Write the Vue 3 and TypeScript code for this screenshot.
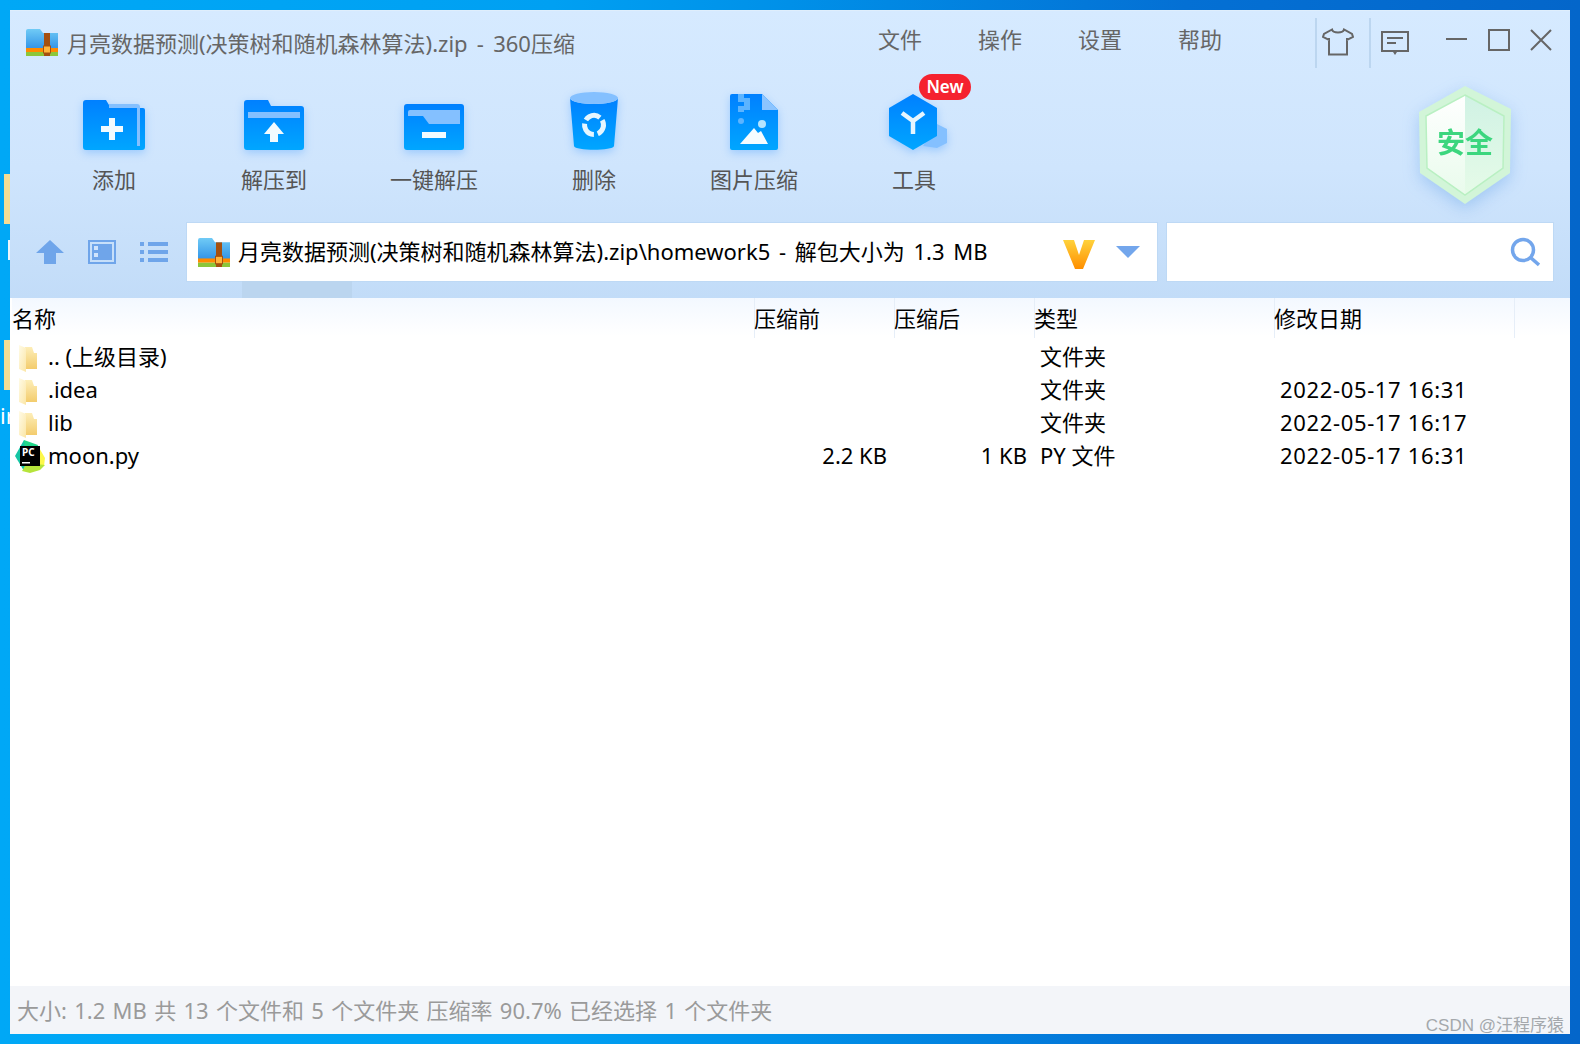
<template>
  <div class="desktop">
    <div class="desk-folder desk-folder-a"></div>
    <div class="desk-folder desk-folder-b"></div>
    <div class="desk-white"></div>
    <span class="desk-text">ir</span>

    <div class="window">
      <svg class="defs" width="0" height="0">
        <defs>
          <linearGradient id="blue" x1="0" y1="0" x2="0" y2="1">
            <stop offset="0" stop-color="#0080ff" />
            <stop offset="1" stop-color="#00a6ff" />
          </linearGradient>
          <linearGradient id="zipBlue" x1="0" y1="0" x2="0" y2="1">
            <stop offset="0" stop-color="#70cbf6" />
            <stop offset="1" stop-color="#2e90e6" />
          </linearGradient>
          <linearGradient id="leaf" x1="0" y1="0" x2="1" y2="1">
            <stop offset="0" stop-color="#fffbe6" />
            <stop offset="1" stop-color="#fbe6a6" />
          </linearGradient>
          <linearGradient id="leafBack" x1="0" y1="0" x2="0" y2="1">
            <stop offset="0" stop-color="#fdeeb8" />
            <stop offset="1" stop-color="#f3cc6d" />
          </linearGradient>
          <linearGradient id="vee" x1="0" y1="0" x2="0" y2="1">
            <stop offset="0" stop-color="#ffd23c" />
            <stop offset="1" stop-color="#ff8f00" />
          </linearGradient>
          <linearGradient id="shieldL" x1="0" y1="0" x2="0" y2="1">
            <stop offset="0" stop-color="#ffffff" />
            <stop offset="1" stop-color="#e9fbec" />
          </linearGradient>
          <linearGradient id="shieldR" x1="0" y1="0" x2="0" y2="1">
            <stop offset="0" stop-color="#d0f2e4" />
            <stop offset="1" stop-color="#e6fbe8" />
          </linearGradient>
          <symbol id="zip" viewBox="0 0 32 28">
            <path d="M0 3a2 2 0 0 1 2-2h12l3 4h15v17H0z" fill="url(#zipBlue)" />
            <rect y="20" width="32" height="4" fill="#ff8a00" />
            <rect y="24" width="32" height="4" fill="#8cc63a" />
            <rect x="18" y="5" width="6" height="23" fill="#a5500f" />
            <rect x="17.5" y="18" width="7" height="7" fill="#ffb43c" stroke="#a5500f" stroke-width="1" />
          </symbol>
          <symbol id="dirIcon" viewBox="0 0 18 28">
            <path d="M6 2h7l2 6h3v16H6z" fill="url(#leafBack)" />
            <path d="M0 0l7 3v24l-7-3z" fill="url(#leaf)" />
          </symbol>
        </defs>
      </svg>

      <header class="chrome">
        <div class="titlebar">
          <svg class="title-zip" width="32" height="28"><use href="#zip" /></svg>
          <span class="title-text">月亮数据预测(决策树和随机森林算法).zip - 360压缩</span>
          <nav class="menu">
            <a v-for="m in menus" :key="m">{{ m }}</a>
          </nav>
          <div class="skin-btn">
            <svg class="shirt" width="32" height="28" viewBox="0 0 32 28" fill="none" stroke="#666" stroke-width="2">
              <path d="M10 1.500 2 6l-1 3 6 3 0-2v16.500h18V10l0 2 6-3-1-3-8-4.500c-1 4-11 4-12 0z" />
            </svg>
          </div>
          <div class="skin-btn skin-btn-msg">
            <svg width="28" height="25" viewBox="0 0 28 25" fill="none" stroke="#666" stroke-width="2">
              <rect x="1" y="1" width="26" height="19" />
              <path d="M6 7h16M6 12h9" />
              <path d="M12 21h4l-2 3z" fill="#666" stroke="none" />
            </svg>
          </div>
          <div class="controls">
            <svg width="22" height="22" viewBox="0 0 22 22" stroke="#666" stroke-width="2" fill="none"><path d="M0 10h21" /></svg>
            <svg width="22" height="22" viewBox="0 0 22 22" stroke="#666" stroke-width="2" fill="none"><rect x="1" y="1" width="20" height="20" /></svg>
            <svg width="22" height="22" viewBox="0 0 22 22" stroke="#666" stroke-width="2" fill="none"><path d="M1 1l20 20M21 1 1 21" /></svg>
          </div>
        </div>

        <div class="toolbar">
          <button class="tool">
            <span class="tool-icon">
              <svg width="62" height="50" viewBox="0 0 62 50">
                <path d="M0 3a3 3 0 0 1 3-3h20l3 5h28v3h6a2 2 0 0 1 2 2v37a3 3 0 0 1-3 3H3a3 3 0 0 1-3-3z" fill="url(#blue)" />
                <path d="M26 4h28a3 3 0 0 1 3 3v39h-3V8H26z" fill="#84c0ff" />
                <path d="M26 18h6v8h8v6h-8v8h-6v-8h-8v-6h8z" fill="#f2fbff" />
              </svg>
            </span>
            <span class="tool-label">添加</span>
          </button>
          <button class="tool">
            <span class="tool-icon">
              <svg width="60" height="50" viewBox="0 0 60 50">
                <path d="M0 3a3 3 0 0 1 3-3h21l3 6h30a3 3 0 0 1 3 3v38a3 3 0 0 1-3 3H3a3 3 0 0 1-3-3z" fill="url(#blue)" />
                <rect x="4" y="12" width="52" height="6" fill="#84c0ff" />
                <path d="M30 22 40 34h-6v8h-8v-8h-6z" fill="#f2fbff" />
              </svg>
            </span>
            <span class="tool-label">解压到</span>
          </button>
          <button class="tool">
            <span class="tool-icon">
              <svg width="60" height="46" viewBox="0 0 60 46">
                <rect width="60" height="46" rx="3" fill="url(#blue)" />
                <path d="M4 8a2 2 0 0 1 2-2h50v14H25l-6-8H4z" fill="#84c0ff" />
                <rect x="18" y="28" width="24" height="6" fill="#f2fbff" />
              </svg>
            </span>
            <span class="tool-label">一键解压</span>
          </button>
          <button class="tool">
            <span class="tool-icon">
              <svg width="48" height="58" viewBox="0 0 48 58">
                <path d="M0 6c2 8 46 8 48 0l-4 48c-1 5-39 5-40 0z" fill="url(#blue)" />
                <ellipse cx="24" cy="6" rx="24" ry="6" fill="#84c0ff" />
                <circle cx="24" cy="33" r="9.500" fill="none" stroke="#e6f6ff" stroke-width="5" stroke-dasharray="16 3.900" transform="rotate(-30 24 33)" />
              </svg>
            </span>
            <span class="tool-label">删除</span>
          </button>
          <button class="tool">
            <span class="tool-icon">
              <svg width="48" height="56" viewBox="0 0 48 56">
                <path d="M2 0h30l16 16v38a2 2 0 0 1-2 2H2a2 2 0 0 1-2-2V2a2 2 0 0 1 2-2z" fill="url(#blue)" />
                <path d="M32 0l16 16H32z" fill="#8bc4ff" />
                <path d="M8 0h6v4H8zM8 4h12v4H8zM14 8h6v4h-6zM8 12h12v4H8zM8 16h6v2H8z" fill="#5cb4ff" />
                <circle cx="11" cy="27" r="3" fill="#5cb4ff" />
                <circle cx="32" cy="30" r="4" fill="#b4e4ff" />
                <path d="M10 50 24 34l4 5 3-2 7 13z" fill="#f6fcff" />
              </svg>
            </span>
            <span class="tool-label">图片压缩</span>
          </button>
          <button class="tool">
            <span class="tool-icon tool-icon-y">
              <svg width="58" height="56" viewBox="0 0 58 56">
                <path d="M48 30l10 5v14l-10 5-14-2z" fill="#84c0ff" />
                <path d="M24 0l24 14v28L24 56 0 42V14z" fill="url(#blue)" />
                <path d="M13 19l11 8 11-8M24 27v13" fill="none" stroke="#e6f6ff" stroke-width="4.500" />
              </svg>
              <span class="new-badge">New</span>
            </span>
            <span class="tool-label">工具</span>
          </button>
          <div class="shield">
            <svg width="92" height="118" viewBox="0 0 92 118">
              <path d="M46 0 92 23l-1 64-45 31L1 87 0 26z" fill="#d2f5d8" />
              <path d="M46 9 7 30l1 52 38 27z" fill="url(#shieldL)" />
              <path d="M46 9l39 21-1 52-38 27z" fill="url(#shieldR)" />
              <path d="M46 9 85 30l-1 52-38 27L8 82 7 30z" fill="none" stroke="#b9f0c2" stroke-width="1.500" />
              <text x="46" y="67" text-anchor="middle" class="shield-text">安全</text>
            </svg>
          </div>
        </div>

        <div class="navbar">
          <svg class="nav-up" width="28" height="24" viewBox="0 0 28 24"><path d="M14 0l14 13h-8v11H8V13H0z" fill="#6fa5ea" /></svg>
          <svg class="nav-view" width="28" height="24" viewBox="0 0 28 24">
            <rect x="1" y="1" width="26" height="22" fill="none" stroke="#6fa5ea" stroke-width="2" />
            <rect x="4" y="4" width="20" height="16" fill="#6fa5ea" />
            <rect x="6" y="6" width="4" height="4" fill="#d0e4fc" />
            <rect x="6" y="13" width="4" height="4" fill="#d0e4fc" />
          </svg>
          <svg class="nav-list" width="28" height="20" viewBox="0 0 28 20" fill="#6fa5ea">
            <rect width="4" height="4" /><rect x="8" width="20" height="4" />
            <rect y="8" width="4" height="4" /><rect x="8" y="8" width="20" height="4" />
            <rect y="16" width="4" height="4" /><rect x="8" y="16" width="20" height="4" />
          </svg>
          <div class="address">
            <svg width="32" height="30" viewBox="0 0 32 28" preserveAspectRatio="none"><use href="#zip" /></svg>
            <span class="address-text">月亮数据预测(决策树和随机森林算法).zip\homework5 - 解包大小为 1.3 MB</span>
            <svg class="vee" width="32" height="29" viewBox="0 0 32 29"><path d="M0 0h11l5 15 5-15h11L20 29h-8z" fill="url(#vee)" /></svg>
            <svg class="caret" width="24" height="12" viewBox="0 0 24 12"><path d="M0 0h24L12 12z" fill="#73a6ec" /></svg>
          </div>
          <div class="search">
            <svg width="30" height="30" viewBox="0 0 30 30" fill="none" stroke="#73a6ec">
              <circle cx="13" cy="13" r="10.500" stroke-width="3.500" />
              <path d="M20.500 20.500 29 28" stroke-width="3.500" />
            </svg>
          </div>
        </div>
        <div class="tabstrip"><span class="tab-active"></span></div>
      </header>

      <section class="list">
        <div class="head">
          <span>名称</span>
          <span>压缩前</span>
          <span>压缩后</span>
          <span>类型</span>
          <span>修改日期</span>
          <span></span>
        </div>
        <div v-for="row in rows" :key="row.name" class="row">
          <span class="cell-name">
            <span class="file-icon">
              <svg v-if="row.dir" width="18" height="28"><use href="#dirIcon" /></svg>
              <svg v-else class="pc" width="32" height="33" viewBox="0 0 32 33">
                <path d="M10 0 24 5l-4 12-12 1z" fill="#21d789" />
                <path d="M1 16 10 0l2 20-2 11z" fill="#16c5a4" />
                <path d="M24 6l7 12-1 8-12-3z" fill="#fcf84a" />
                <path d="M8 31l5-8 18 2-5 5-10 3z" fill="#b6e43b" />
                <rect x="6" y="6" width="20" height="20" fill="#000" />
                <text x="8" y="16" class="pc-text">PC</text>
                <rect x="8" y="22" width="8" height="1.500" fill="#fff" />
              </svg>
            </span>
            {{ row.name }}
          </span>
          <span class="cell-num">{{ row.before }}</span>
          <span class="cell-num">{{ row.after }}</span>
          <span class="cell-type">{{ row.type }}</span>
          <span class="cell-date">{{ row.date }}</span>
        </div>
      </section>

      <footer class="status">
        <span>大小: 1.2 MB 共 13 个文件和 5 个文件夹 压缩率 90.7% 已经选择 1 个文件夹</span>
        <span class="watermark">CSDN @汪程序猿</span>
      </footer>
    </div>
  </div>
</template>

<script setup lang="ts">
type Row = {
  name: string;
  dir: boolean;
  before: string;
  after: string;
  type: string;
  date: string;
};

const menus = ["文件", "操作", "设置", "帮助"];

const rows: Row[] = [
  { name: ".. (上级目录)", dir: true, before: "", after: "", type: "文件夹", date: "" },
  { name: ".idea", dir: true, before: "", after: "", type: "文件夹", date: "2022-05-17 16:31" },
  { name: "lib", dir: true, before: "", after: "", type: "文件夹", date: "2022-05-17 16:17" },
  { name: "moon.py", dir: false, before: "2.2 KB", after: "1 KB", type: "PY 文件", date: "2022-05-17 16:31" },
];
</script>

<style>
html,
body {
  margin: 0;
  overflow: hidden;
}
</style>

<style scoped>
.desktop {
  position: relative;
  box-sizing: border-box;
  width: 1580px;
  height: 1044px;
  padding: 10px;
  overflow: hidden;
  background: linear-gradient(90deg, #00a8f6 0%, #00a0f2 35%, #0090e8 50%, #0470d4 75%, #0466ca 100%);
  font-family: "Noto Sans", "Noto Sans CJK SC", sans-serif;
  font-size: 22px;
}

.desk-folder {
  position: absolute;
  left: 4px;
  width: 8px;
  height: 50px;
  background: #f6dd94;
}

.desk-folder-a {
  top: 174px;
}

.desk-folder-b {
  top: 340px;
}

.desk-white {
  position: absolute;
  left: 8px;
  top: 240px;
  width: 4px;
  height: 20px;
  background: #eef6fc;
}

.desk-text {
  position: absolute;
  left: 0;
  top: 400px;
  color: #fff;
}

.window {
  position: relative;
  display: flex;
  flex-direction: column;
  width: 1560px;
  height: 1024px;
  background: #fff;
}

.defs {
  position: absolute;
}

.chrome {
  box-shadow: inset 0 1px 0 #dfeefc;
  background: linear-gradient(180deg, #d6eaff 0%, #cfe5fd 55%, #c2dcf8 100%);
}

.titlebar {
  display: flex;
  align-items: flex-start;
  height: 62px;
}

.title-zip {
  margin: 18px 0 0 16px;
}

.title-text {
  flex: none;
  width: 811px;
  margin: 18px 0 0 9px;
  white-space: nowrap;
  word-spacing: 3.5px;
  color: #666;
  line-height: 30px;
}

.menu {
  display: flex;
  gap: 56px;
  margin-top: 14px;
  line-height: 30px;
  color: #666;
}

.skin-btn {
  display: flex;
  justify-content: center;
  box-sizing: border-box;
  width: 54px;
  height: 50px;
  margin-top: 8px;
  padding-top: 10px;
  border-left: 2px solid #bcd6f0;
}

.menu + .skin-btn {
  margin-left: 93px;
}

.shirt {
  margin-right: 10px;
}

.skin-btn-msg svg {
  margin: 3px 4px 0 0;
}

.controls {
  display: flex;
  gap: 20px;
  margin: 19px 0 0 23px;
}

.toolbar {
  display: flex;
  align-items: flex-start;
  height: 151px;
  padding-left: 24px;
}

.tool {
  display: flex;
  flex-direction: column;
  align-items: center;
  width: 160px;
  padding: 0;
  border: 0;
  background: none;
  font: inherit;
}

.tool-icon {
  position: relative;
  display: flex;
  align-items: flex-end;
  height: 78px;
}

.tool-icon svg {
  filter: drop-shadow(0 3px 4px rgba(0, 120, 255, 0.25));
}

.tool-icon-y {
  margin-left: 8px;
}

.new-badge {
  position: absolute;
  left: 30px;
  top: 2px;
  width: 52px;
  height: 26px;
  border-radius: 13px;
  background: #f5222f;
  color: #fff;
  font-size: 17px;
  font-weight: 600;
  line-height: 26px;
  text-align: center;
}

.tool-label {
  margin-top: 14px;
  line-height: 30px;
  color: #555;
}

.shield {
  margin: 14px 0 0 425px;
  filter: drop-shadow(0 5px 8px rgba(80, 150, 230, 0.35));
}

.shield-text {
  fill: #3cd67e;
  font-size: 28px;
  font-weight: 700;
}

.navbar {
  display: flex;
  align-items: center;
  height: 58px;
  padding-left: 26px;
}

.nav-up,
.nav-view {
  margin-right: 24px;
}

.address {
  display: flex;
  align-items: center;
  box-sizing: border-box;
  width: 970px;
  height: 58px;
  margin-left: 19px;
  padding-left: 11px;
  background: #fff;
  box-shadow: 0 0 0 1px #bed9f5;
}

.address-text {
  flex: 1;
  margin: 0 0 5px 8px;
  white-space: nowrap;
  word-spacing: 3px;
  color: #000;
}

.vee {
  margin: 4px 21px 0 0;
}

.caret {
  margin: 0 17px 0 0;
}

.search {
  display: flex;
  align-items: center;
  justify-content: flex-end;
  box-sizing: border-box;
  width: 386px;
  height: 58px;
  margin-left: 10px;
  padding-right: 13px;
  background: #fff;
  box-shadow: 0 0 0 1px #bed9f5;
}

.tabstrip {
  display: flex;
  height: 17px;
  padding-left: 232px;
}

.tab-active {
  width: 110px;
  background: #bbd5ef;
}

.list {
  flex: 1;
  padding-left: 2px;
}

.head,
.row {
  display: grid;
  grid-template-columns: 742px 140px 140px 240px 240px 1fr;
}

.head {
  height: 38px;
  background: linear-gradient(180deg, #f3f8ff, #fff);
  color: #000;
  line-height: 40px;
}

.head span + span {
  box-shadow: inset 1px 0 0 #e6eef8;
}

.row {
  height: 33px;
  line-height: 33px;
  color: #000;
}

.head + .row {
  margin-top: 4px;
}

.cell-name {
  display: flex;
  align-items: center;
  white-space: nowrap;
}

.file-icon {
  display: flex;
  flex: none;
  box-sizing: border-box;
  width: 36px;
  height: 28px;
  margin-top: 4px;
  padding-left: 7px;
}

.file-icon svg {
  flex: none;
}

.pc {
  margin: -4px 0 0 -5px;
}

.pc-text {
  fill: #fff;
  font-size: 10px;
  font-weight: 700;
}

.cell-num {
  padding-right: 7px;
  text-align: right;
}

.cell-type,
.cell-date {
  padding-left: 6px;
}

.cell-date {
  letter-spacing: 0.65px;
}

.status {
  position: relative;
  display: flex;
  align-items: center;
  height: 48px;
  padding: 0 0 2px 7px;
  box-sizing: border-box;
  word-spacing: 1.6px;
  background: #f3f5f9;
  color: #9a9a9a;
}

.watermark {
  position: absolute;
  right: 6px;
  bottom: -3px;
  color: #a4a8ac;
  font-family: "Liberation Sans", "Noto Sans CJK SC", sans-serif;
  font-size: 17px;
  line-height: 22px;
  word-spacing: 0;
}
</style>
